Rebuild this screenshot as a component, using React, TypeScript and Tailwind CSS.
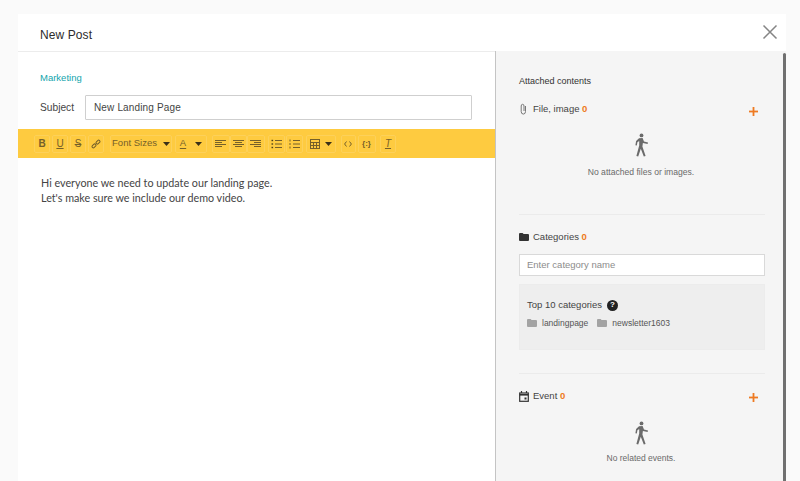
import React from "react";

const Walker = () => (
  <svg width="18" height="24" viewBox="0 0 18 24" fill="#6b6b6b">
    <circle cx="9.5" cy="2.4" r="1.9" />
    <path d="M7 5.2 L10.6 5 L12 8.6 L16 9.6 L15.6 11 L10.9 10 L10.4 13.6 L13.6 23 L11.8 23.4 L8.8 15.8 L6.2 23.4 L4.4 23 L7.2 12.6 L7.2 8 L5.4 9.2 L4.8 12.6 L3.4 12.3 L4.1 8 Z" />
  </svg>
);

const Plus = () => (
  <svg width="11" height="11" viewBox="0 0 11 11" fill="#ee7a22">
    <rect x="4.6" y="1" width="1.8" height="9" />
    <rect x="1" y="4.6" width="9" height="1.8" />
  </svg>
);

const Folder = ({ fill, w = 10, h = 8 }: { fill: string; w?: number; h?: number }) => (
  <svg width={w} height={h} viewBox="0 0 10 8" fill={fill}>
    <path d="M0 1 Q0 0 1 0 H3.6 L4.6 1 H9 Q10 1 10 2 V7 Q10 8 9 8 H1 Q0 8 0 7 Z" />
  </svg>
);

const Btn = ({ className, children }: { className: string; children: React.ReactNode }) => (
  <div className={`h-[18px] flex items-center justify-center gap-[6px] rounded-[2px] border border-[#fdd15a] bg-[#fecb40] text-[#75602a] ${className}`}>
    {children}
  </div>
);

const Caret = () => (
  <svg width="7" height="4" viewBox="0 0 7 4" fill="#3a3018">
    <path d="M0 0 H7 L3.5 4 Z" />
  </svg>
);

const stroke = { stroke: "#75602a", strokeWidth: 1, fill: "none" };

const Align = ({ kind }: { kind: "l" | "c" | "r" }) => {
  const lines = [1.5, 3.5, 5.5, 7.5];
  return (
    <svg width="11" height="9" viewBox="0 0 11 9" {...stroke}>
      {lines.map((y, i) => {
        const w = i % 2 === 0 ? 11 : 7;
        const x = kind === "l" ? 0 : kind === "c" ? (11 - w) / 2 : 11 - w;
        return <path key={y} d={`M${x} ${y} H${x + w}`} />;
      })}
    </svg>
  );
};

const ListIcon = ({ numbered }: { numbered?: boolean }) => (
  <svg width="11" height="10" viewBox="0 0 11 10" {...stroke}>
    {[1.5, 5, 8.5].map((y) => (
      <React.Fragment key={y}>
        <path d={`M4 ${y} H11`} />
        {numbered ? (
          <path d={`M1 ${y - 1} V${y + 1}`} />
        ) : (
          <rect x="0.5" y={y - 0.7} width="1.6" height="1.4" fill="#4e4018" stroke="none" />
        )}
      </React.Fragment>
    ))}
  </svg>
);

export default function App() {
  return (
    <div className="w-[800px] h-[481px] overflow-hidden bg-[#fafafa] pt-[14px] pl-[18px] font-['Liberation_Sans',Arial,sans-serif]">
      <div className="w-[768px] h-[467px] flex flex-col bg-white">
        {/* Header */}
        <div className="h-[38px] shrink-0 flex items-center justify-between pl-[22px] pr-[8px] border-b border-[#ececec]">
          <span className="pt-[4px] text-[12px] text-[#2b2b2b] tracking-[0.1px]">New Post</span>
          <svg width="16" height="16" viewBox="0 0 16 16" stroke="#858585" strokeWidth="1.5" fill="none" className="mt-[-2px]">
            <path d="M1.5 1.5 L14.5 14.5 M14.5 1.5 L1.5 14.5" />
          </svg>
        </div>

        <div className="flex flex-1 min-h-0">
          {/* Editor */}
          <div className="w-[477px] shrink-0 flex flex-col">
            <div className="pl-[22px] pt-[20px] text-[9.5px] leading-[12px] text-[#12a5ad]">Marketing</div>
            <div className="flex items-center pl-[22px] mt-[11px]">
              <span className="w-[45px] text-[10.2px] text-[#444]">Subject</span>
              <div className="w-[387px] h-[25px] flex items-center pl-[8px] border border-[#cfcfcf] rounded-[1px] text-[10px] text-[#444] tracking-[0.15px]">
                New Landing Page
              </div>
            </div>
            {/* Toolbar */}
            <div className="h-[29px] mt-[9px] bg-[#fecb40] flex items-center pl-[16px]">
              <div className="flex gap-[2px]">
                <Btn className="w-[16px] font-bold text-[10px]">B</Btn>
                <Btn className="w-[16px] underline text-[10px]">U</Btn>
                <Btn className="w-[16px] line-through text-[10px]">S</Btn>
                <Btn className="w-[16px]">
                  <svg width="10" height="10" viewBox="0 0 10 10" {...stroke}>
                    <rect x="0.8" y="5.6" width="4.4" height="2.6" rx="1.3" transform="rotate(-45 3 6.9)" />
                    <rect x="4.8" y="1.8" width="4.4" height="2.6" rx="1.3" transform="rotate(-45 7 3.1)" />
                  </svg>
                </Btn>
              </div>
              <Btn className="w-[62px] ml-[6px] text-[9.5px]">
                <span>Font Sizes</span>
                <Caret />
              </Btn>
              <Btn className="w-[32px] ml-[3px] text-[9.5px] !gap-[9px]">
                <span className="underline underline-offset-2">A</span>
                <Caret />
              </Btn>
              <div className="flex ml-[5px]">
                <Btn className="w-[17.5px]"><Align kind="l" /></Btn>
                <Btn className="w-[17.5px]"><Align kind="c" /></Btn>
                <Btn className="w-[17.5px]"><Align kind="r" /></Btn>
              </div>
              <div className="flex gap-[1px] ml-[3px]">
                <Btn className="w-[17px]"><ListIcon /></Btn>
                <Btn className="w-[17px]"><ListIcon numbered /></Btn>
              </div>
              <Btn className="w-[30px] ml-[3px]">
                <svg width="10" height="10" viewBox="0 0 10 10" {...stroke} className="mr-[-1px]">
                  <rect x="0.5" y="0.5" width="9" height="9" />
                  <path d="M0.5 3.5 H9.5 M0.5 6.5 H9.5 M3.5 3.5 V9.5 M6.5 3.5 V9.5" />
                </svg>
                <Caret />
              </Btn>
              <div className="flex gap-[2px] ml-[5px]">
                <Btn className="w-[15px]">
                  <svg width="8" height="6" viewBox="0 0 8 6" {...stroke}><path d="M2.5 0.5 L0.6 3 L2.5 5.5 M5.5 0.5 L7.4 3 L5.5 5.5" /></svg>
                </Btn>
                <Btn className="w-[18px] text-[8px] font-bold">{"{:}"}</Btn>
              </div>
              <Btn className="w-[16px] ml-[4.5px] text-[10px] italic underline">T</Btn>
            </div>
            {/* Body */}
            <div className="pl-[23px] pt-[17px] font-['Lato',sans-serif] text-[10.75px] leading-[15px] text-[#444]">
              <p>Hi everyone we need to update our landing page.</p>
              <p>Let&apos;s make sure we include our demo video.</p>
            </div>
          </div>

          {/* Sidebar */}
          <div className="w-[291px] shrink-0 flex bg-[#f5f5f5] border-l border-[#c4c4c4] mt-[-1px]">
            <div className="w-[287px] pt-[24px] flex flex-col">
              <div className="pl-[23px] text-[9px] leading-[12px] text-[#333]">Attached contents</div>

              <div className="flex justify-between items-start pl-[23px] pr-[24px] mt-[15px]">
                <div className="flex items-center gap-[5px] text-[9.5px] leading-[14px] text-[#444]">
                  <svg width="9" height="12" viewBox="0 0 9 12" stroke="#777" strokeWidth="1" fill="none">
                    <path d="M6.5 3 V8.5 A2 2.4 0 0 1 2.2 8.5 V3 A1.4 1.7 0 0 1 5 3 V8" />
                  </svg>
                  <span>File, image <b className="text-[#ee7a22]">0</b></span>
                </div>
                <div className="mt-[4px]"><Plus /></div>
              </div>
              <div className="flex flex-col items-center mt-[16px] ml-[3px]">
                <Walker />
                <span className="text-[8.6px] leading-[12px] text-[#6a6a6a] mt-[9px]">No attached files or images.</span>
              </div>
              <div className="h-px bg-[#ebebeb] ml-[23px] mr-[18px] mt-[36px]" />

              <div className="flex items-center gap-[4px] pl-[23px] mt-[15px] text-[9.5px] leading-[14px] text-[#444]">
                <Folder fill="#333" />
                <span>Categories <b className="text-[#ee7a22]">0</b></span>
              </div>
              <div className="h-[22px] ml-[23px] mr-[18px] mt-[10px] flex items-center pl-[7px] bg-white border border-[#d9d9d9] text-[9.5px] text-[#8c8c8c]">
                Enter category name
              </div>
              <div className="h-[66px] ml-[23px] mr-[18px] mt-[8px] bg-[#eeeeee] border border-[#ececec] pl-[7px] pt-[13px]">
                <div className="flex items-center gap-[5px] text-[9.5px] leading-[14px] text-[#444]">
                  <span>Top 10 categories</span>
                  <span className="w-[11px] h-[11px] rounded-full bg-[#222] text-white text-[8px] font-bold flex items-center justify-center">?</span>
                </div>
                <div className="flex items-center mt-[4px] text-[8.5px] leading-[14px] text-[#555]">
                  <Folder fill="#a3a3a3" />
                  <span className="ml-[5px]">landingpage</span>
                  <span className="ml-[9px]"><Folder fill="#a3a3a3" /></span>
                  <span className="ml-[5px]">newsletter1603</span>
                </div>
              </div>
              <div className="h-px bg-[#ebebeb] ml-[23px] mr-[18px] mt-[23px]" />

              <div className="flex justify-between items-start pl-[23px] pr-[24px] mt-[15px]">
                <div className="flex items-center gap-[4px] text-[9.5px] leading-[14px] text-[#444]">
                  <svg width="10" height="11" viewBox="0 0 10 11" fill="none" stroke="#333" strokeWidth="1.2">
                    <rect x="0.7" y="2" width="8.6" height="8.3" />
                    <path d="M0.7 3.8 H9.3" strokeWidth="1.6" />
                    <path d="M2.5 0 V2 M7.5 0 V2" />
                    <rect x="5.5" y="6.5" width="2" height="2" fill="#333" stroke="none" />
                  </svg>
                  <span>Event <b className="text-[#ee7a22]">0</b></span>
                </div>
                <div className="mt-[3px]"><Plus /></div>
              </div>
              <div className="flex flex-col items-center mt-[18px] ml-[3px]">
                <Walker />
                <span className="text-[8.5px] leading-[12px] text-[#6a6a6a] mt-[7px]">No related events.</span>
              </div>
            </div>
            <div className="w-[3px] bg-[#707070] rounded-t-[2px] mt-[2px]" />
          </div>
        </div>
      </div>
    </div>
  );
}
